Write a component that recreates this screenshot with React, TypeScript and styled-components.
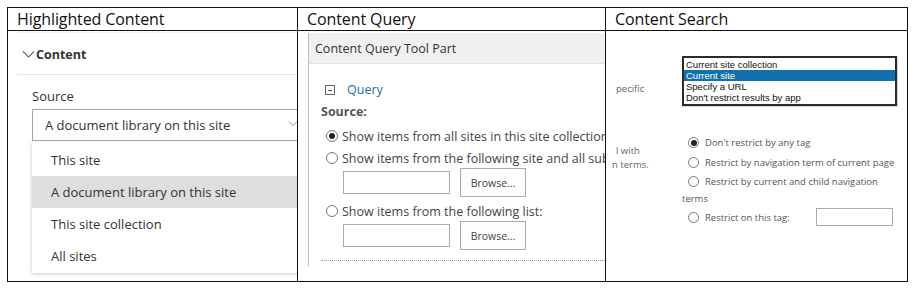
import React from "react";
import styled, {createGlobalStyle} from "styled-components";

const GlobalStyle = createGlobalStyle`
    body {
        margin: 0;
        background: #fff;
        font-family: "Liberation Sans", Arial, sans-serif;
    }
`;

const Page = styled.div`
    padding: 7px 0 0 7px;
`;

const Table = styled.div`
    width: 901px;
    box-sizing: border-box;
    border: 1px solid #111;
    display: grid;
    grid-template-columns: 290px 308px 301px;
    grid-template-rows: 23px 250px;
`;

const HeadCell = styled.div<{$last?: boolean}>`
    box-sizing: border-box;
    border-bottom: 1px solid #111;
    border-right: ${props => props.$last ? "none" : "1px solid #111"};
    padding: 0 0 0 9px;
    font-family: "Open Sans", sans-serif;
    font-size: 16px;
    line-height: 22px;
    color: #111;
    letter-spacing: -0.1px;
`;

const BodyCell = styled.div<{$last?: boolean}>`
    box-sizing: border-box;
    border-right: ${props => props.$last ? "none" : "1px solid #111"};
    overflow: hidden;
    position: relative;
`;

/* ---------- Highlighted Content ---------- */

const Modern = styled.div`
    font-family: "Open Sans", sans-serif;
    color: #333;
    padding: 0 0 0 9px;
`;

const AccordionHead = styled.div`
    display: flex;
    align-items: center;
    height: 40px;
    margin-top: 1px;
    padding-top: 1px;
    border-top: 1px solid #f2f2f2;
    border-bottom: 1px solid #e6e6e6;
    padding-left: 5px;
    font-size: 12.5px;
    font-weight: 700;
    color: #333;
    svg {
        margin-right: 1px;
    }
`;

const FieldLabel = styled.div`
    margin: 10px 0 0 15px;
    font-size: 13px;
    line-height: 22px;
    color: #333;
`;

const Dropdown = styled.div`
    margin: 2px 0 0 15px;
    width: 290px;
    height: 32px;
    box-sizing: border-box;
    border: 1px solid #a6a6a6;
    display: flex;
    align-items: center;
    padding-left: 12px;
    font-size: 13px;
    color: #333;
    position: relative;
    svg {
        position: absolute;
        left: 255px;
        top: 10px;
    }
`;

const Menu = styled.div`
    margin: 1px 0 0 15px;
    width: 290px;
    background: #fff;
    box-shadow: 0 1px 4px rgba(0, 0, 0, 0.22);
    padding: 2px 0 1px;
`;

const MenuItem = styled.div<{$active?: boolean}>`
    height: 32px;
    display: flex;
    align-items: center;
    padding-left: 19px;
    font-size: 13px;
    color: #333;
    background: ${props => props.$active ? "#dedede" : "transparent"};
`;

/* ---------- Content Query ---------- */

const Classic = styled.div`
    font-family: "Open Sans", sans-serif;
    color: #444;
    padding: 2px 0 0 10px;
    height: 100%;
    box-sizing: border-box;
`;

const ToolPart = styled.div`
    border-left: 1px solid #bdbdbd;
    height: 233px;
`;

const ToolHead = styled.div`
    height: 30px;
    background: #f0f0f0;
    border-bottom: 1px solid #e2e2e2;
    display: flex;
    align-items: center;
    padding-left: 6px;
    font-size: 12.5px;
    color: #333;
`;

const ToolBody = styled.div`
    padding: 0 0 0 12px;
`;

const SectionTitle = styled.div`
    display: flex;
    align-items: center;
    gap: 12px;
    margin: 17px 0 0 4px;
    font-size: 12.5px;
    color: #1b6aa5;
`;

const Minus = styled.span`
    width: 8px;
    height: 8px;
    border: 1px solid #666;
    position: relative;
    &::after {
        content: "";
        position: absolute;
        left: 2px;
        right: 2px;
        top: 4px;
        height: 1px;
        background: #555;
    }
`;

const BoldLabel = styled.div`
    margin-top: 5px;
    font-size: 12.5px;
    font-weight: 700;
    color: #555;
    line-height: 18px;
`;

const RadioRow = styled.div<{$size: number; $gap: number; $h?: number}>`
    display: flex;
    align-items: center;
    gap: ${props => props.$gap}px;
    white-space: nowrap;
    font-size: ${props => props.$size}px;
    height: ${props => props.$h ? `${props.$h}px` : "auto"};
`;

const Radio = styled.span<{$checked?: boolean; $d: number}>`
    flex: none;
    width: ${props => props.$d}px;
    height: ${props => props.$d}px;
    box-sizing: border-box;
    border-radius: 50%;
    border: 1px solid #777;
    display: flex;
    align-items: center;
    justify-content: center;
    &::after {
        content: "";
        width: ${props => Math.round(props.$d / 2)}px;
        height: ${props => Math.round(props.$d / 2)}px;
        border-radius: 50%;
        background: ${props => props.$checked ? "#222" : "transparent"};
    }
`;

const QueryRadios = styled.div`
    margin: 4px 0 0 5px;
    color: #444;
`;

const PickRow = styled.div`
    display: flex;
    align-items: center;
    gap: 10px;
    margin: -2px 0 2px 17px;
    height: 31px;
`;

const TextBox = styled.div<{$w: number; $h: number; $left?: number}>`
    width: ${props => props.$w}px;
    height: ${props => props.$h}px;
    margin-left: ${props => props.$left ?? 0}px;
    box-sizing: border-box;
    border: 1px solid #ababab;
    background: #fff;
`;

const BrowseButton = styled.div`
    width: 66px;
    height: 29px;
    box-sizing: border-box;
    border: 1px solid #ababab;
    background: #fdfdfd;
    display: flex;
    align-items: center;
    justify-content: center;
    font-size: 10.5px;
    color: #444;
`;

const Dotted = styled.div`
    margin-top: 9px;
    border-top: 1px dotted #9a9a9a;
`;

/* ---------- Content Search ---------- */

const Search = styled.div`
    display: grid;
    grid-template-columns: 76px 1fr;
    font-family: "Open Sans", sans-serif;
    color: #555;
    padding-top: 25px;
`;

const SideLabels = styled.div`
    padding-left: 10px;
    font-size: 9.5px;
    color: #666;
    overflow: hidden;
    display: flex;
    flex-direction: column;
`;

const SideText = styled.div<{$top: number; $shift?: number}>`
    margin-top: ${props => props.$top}px;
    margin-left: ${props => props.$shift ?? 0}px;
    line-height: 14px;
    white-space: nowrap;
`;

const ListBox = styled.div`
    width: 215px;
    box-sizing: border-box;
    border: 2px solid #2b2b2b;
    padding: 1px 0;
    font-family: "Liberation Sans", Arial, sans-serif;
    font-size: 9.5px;
    line-height: 11px;
    color: #111;
    box-shadow: 1px 1px 1px rgba(0, 0, 0, 0.15);
`;

const ListOption = styled.div<{$selected?: boolean}>`
    padding-left: 2px;
    background: ${props => props.$selected ? "#1170ae" : "transparent"};
    color: ${props => props.$selected ? "#fff" : "#111"};
`;

const TagOptions = styled.div`
    margin: 27px 0 0 0;
    display: flex;
    flex-direction: column;
    font-size: 9.5px;
    color: #555;
`;

const TagRow = styled.div`
    display: flex;
    align-items: center;
    height: 19.5px;
    padding-left: 6px;
`;

const Wrapped = styled.div`
    font-size: 9.5px;
    line-height: 14px;
    margin-bottom: 2px;
    color: #555;
`;

const Chevron = ({size, color}: {size: number; color: string}) => (
    <svg width={size} height={size / 2 + 2} viewBox="0 0 14 8">
        <polyline points="1,1 7,7 13,1" fill="none" stroke={color} strokeWidth="1.1"/>
    </svg>
);

const App = () => {
    return (
        <>
            <GlobalStyle/>
            <Page>
                <Table>
                    <HeadCell>Highlighted Content</HeadCell>
                    <HeadCell>Content Query</HeadCell>
                    <HeadCell $last>Content Search</HeadCell>

                    <BodyCell>
                        <Modern>
                            <AccordionHead>
                                <Chevron size={13} color="#555"/>
                                Content
                            </AccordionHead>
                            <FieldLabel>Source</FieldLabel>
                            <Dropdown>
                                A document library on this site
                                <Chevron size={10} color="#777"/>
                            </Dropdown>
                            <Menu>
                                <MenuItem>This site</MenuItem>
                                <MenuItem $active>A document library on this site</MenuItem>
                                <MenuItem>This site collection</MenuItem>
                                <MenuItem>All sites</MenuItem>
                            </Menu>
                        </Modern>
                    </BodyCell>

                    <BodyCell>
                        <Classic>
                            <ToolPart>
                                <ToolHead>Content Query Tool Part</ToolHead>
                                <ToolBody>
                                    <SectionTitle>
                                        <Minus/>
                                        Query
                                    </SectionTitle>
                                    <BoldLabel>Source:</BoldLabel>
                                    <QueryRadios>
                                        <RadioRow $size={12.5} $gap={4} $h={22}>
                                            <Radio $checked $d={12}/>
                                            Show items from all sites in this site collection
                                        </RadioRow>
                                        <RadioRow $size={12.5} $gap={4} $h={22}>
                                            <Radio $d={12}/>
                                            Show items from the following site and all subsites:
                                        </RadioRow>
                                        <PickRow>
                                            <TextBox $w={107} $h={23}/>
                                            <BrowseButton>Browse...</BrowseButton>
                                        </PickRow>
                                        <RadioRow $size={12.5} $gap={4} $h={22}>
                                            <Radio $d={12}/>
                                            Show items from the following list:
                                        </RadioRow>
                                        <PickRow>
                                            <TextBox $w={107} $h={23}/>
                                            <BrowseButton>Browse...</BrowseButton>
                                        </PickRow>
                                    </QueryRadios>
                                    <Dotted/>
                                </ToolBody>
                            </ToolPart>
                        </Classic>
                    </BodyCell>

                    <BodyCell $last>
                        <Search>
                            <SideLabels>
                                <SideText $top={26}>pecific</SideText>
                                <SideText $top={48}>l with</SideText>
                                <SideText $top={0} $shift={-4}>n terms.</SideText>
                            </SideLabels>
                            <div>
                                <ListBox>
                                    <ListOption>Current site collection</ListOption>
                                    <ListOption $selected>Current site</ListOption>
                                    <ListOption>Specify a URL</ListOption>
                                    <ListOption>Don't restrict results by app</ListOption>
                                </ListBox>
                                <TagOptions>
                                    <TagRow>
                                        <RadioRow $size={9.5} $gap={6}>
                                            <Radio $checked $d={11}/>
                                            Don't restrict by any tag
                                        </RadioRow>
                                    </TagRow>
                                    <TagRow>
                                        <RadioRow $size={9.5} $gap={6}>
                                            <Radio $d={11}/>
                                            Restrict by navigation term of current page
                                        </RadioRow>
                                    </TagRow>
                                    <TagRow>
                                        <RadioRow $size={9.5} $gap={6}>
                                            <Radio $d={11}/>
                                            Restrict by current and child navigation
                                        </RadioRow>
                                    </TagRow>
                                    <Wrapped>terms</Wrapped>
                                    <TagRow>
                                        <RadioRow $size={9.5} $gap={6}>
                                            <Radio $d={11}/>
                                            Restrict on this tag:
                                        </RadioRow>
                                        <TextBox $w={77} $h={18} $left={26}/>
                                    </TagRow>
                                </TagOptions>
                            </div>
                        </Search>
                    </BodyCell>
                </Table>
            </Page>
        </>
    );
};

export default App;
